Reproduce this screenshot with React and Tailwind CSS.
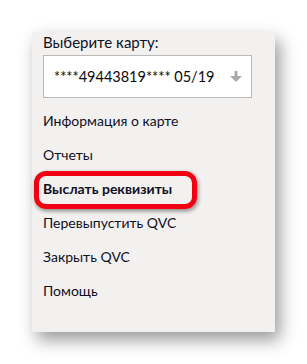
import React from "react";

const items = [
  "Информация о карте",
  "Отчеты",
  "Выслать реквизиты",
  "Перевыпустить QVC",
  "Закрыть QVC",
  "Помощь",
];

export default function App() {
  return (
    <div className="w-[307px] h-[364px] bg-white pt-[32px] pl-[32px] font-['Lato',sans-serif]">
      <div className="w-[243px] h-[300px] bg-[#f2f1ef] shadow-[5px_8px_16px_rgba(0,0,0,0.4)] pl-[11px] text-[#10101f]">
        <div className="text-[15px] leading-[20px]">Выберите карту:</div>
        <div className="mt-[3px] w-[209px] h-[43px] bg-white border border-[#b8b8b8] flex items-center justify-between pl-[10px] pr-[9px]">
          <span className="text-[14.5px] leading-[20px] text-[#0a0a0a]">****49443819**** 05/19</span>
          <svg width="12" height="12" viewBox="0 0 12 12">
            <rect x="4.5" y="0" width="3" height="6" fill="#a9a9a9" />
            <polygon points="0,5 12,5 6,11" fill="#a9a9a9" />
          </svg>
        </div>
        <div className="mt-[6px] flex flex-col">
          {items.map((t, i) => (
            <div key={t} className="relative h-[34px] flex items-center text-[14px] leading-[20px]">
              {i === 2 ? (
                <>
                  <span className="font-bold">{t}</span>
                  <div className="absolute left-[-9px] top-[-1px] w-[163px] h-[38px] border-[5px] border-[#f00012] rounded-[12px] shadow-[1px_2px_4px_rgba(0,0,0,0.45)]" />
                </>
              ) : (
                <span>{t}</span>
              )}
            </div>
          ))}
        </div>
      </div>
    </div>
  );
}
